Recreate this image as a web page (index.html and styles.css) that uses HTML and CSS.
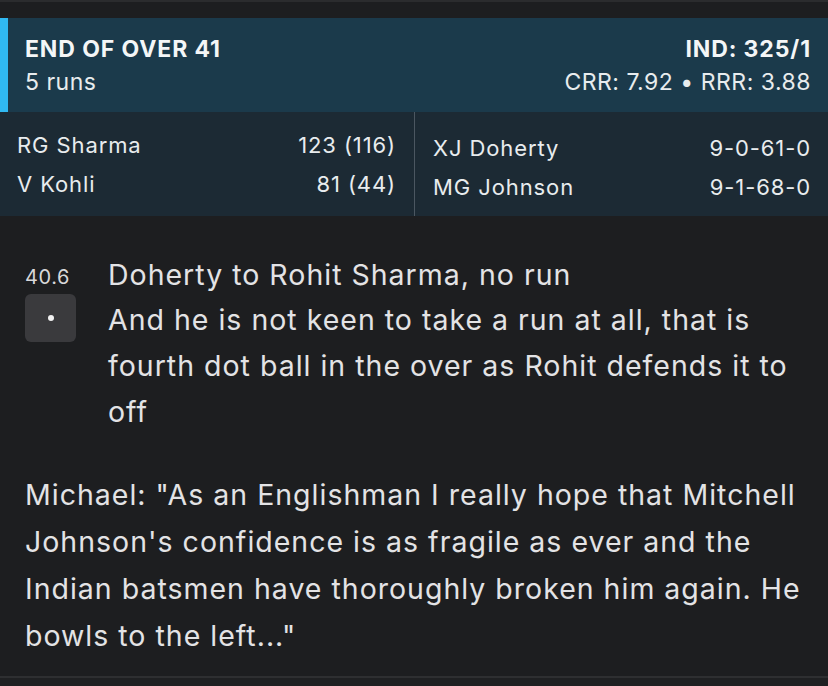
FILE: index.html
```html
<!DOCTYPE html>
<html>
<head>
<meta charset="utf-8">
<link rel="stylesheet" href="styles.css">
</head>
<body>
<div class="topline"></div>
<div class="page">
  <section class="over">
    <div class="over-left">
      <div class="over-title">END OF OVER 41</div>
      <div class="over-sub">5 runs</div>
    </div>
    <div class="over-right">
      <div class="over-title">IND: 325/1</div>
      <div class="over-sub">CRR: 7.92 • RRR: 3.88</div>
    </div>
  </section>
  <section class="players">
    <div class="col bats">
      <div class="row"><span>RG Sharma</span><span>123 (116)</span></div>
      <div class="row"><span>V Kohli</span><span>81 (44)</span></div>
    </div>
    <div class="col bowl">
      <div class="row"><span>XJ Doherty</span><span>9-0-61-0</span></div>
      <div class="row"><span>MG Johnson</span><span>9-1-68-0</span></div>
    </div>
  </section>
  <section class="ball">
    <div class="ball-meta">
      <div class="ball-num">40.6</div>
      <div class="ball-chip"><span class="dot"></span></div>
    </div>
    <div class="ball-text">
      <div class="ball-head">Doherty to Rohit Sharma, no run</div>
      <div class="ball-body">And he is not keen to take a run at all, that is fourth dot ball in the over as Rohit defends it to off</div>
    </div>
  </section>
  <section class="comment">Michael: "As an Englishman I really hope that Mitchell Johnson's confidence is as fragile as ever and the Indian batsmen have thoroughly broken him again. He bowls to the left..."</section>
  <footer class="footer"></footer>
</div>
</body>
</html>
```
FILE: styles.css
```css
* { box-sizing: border-box; }
html, body { margin: 0; padding: 0; }
body {
  width: 828px;
  height: 686px;
  overflow: hidden;
  background: #1d1e20;
  font-family: Inter, "Noto Sans", sans-serif;
  color: #e6e6e8;
}
.topline { height: 2px; background: #2b2c2e; }
.page { padding-top: 16px; }
.over {
  height: 94px;
  background: #1b3a4b;
  border-left: 8px solid #30b9f2;
  display: flex;
  justify-content: space-between;
  padding: 15px 17px 0 17px;
}
.over-title { font-weight: 700; font-size: 23px; line-height: 33px; letter-spacing: 0.9px; color: #f4f6f7; }
.over-sub { font-size: 23px; line-height: 33px; letter-spacing: 0.5px; color: #e8ecee; }
.over-right { text-align: right; }
.players {
  height: 104px;
  background: #1c2a34;
  display: flex;
}
.col { padding-top: 14px; }
.bats { padding-left: 17px; padding-right: 18px; border-right: 1px solid #4b5761; width: 415px; }
.bowl { padding-left: 18px; padding-right: 17px; flex: 1; padding-top: 17px; }
.row {
  display: flex;
  justify-content: space-between;
  font-size: 22px;
  line-height: 38.5px;
  letter-spacing: 0.9px;
  color: #e8ecee;
}
.ball {
  display: flex;
  padding: 37px 16px 0 25px;
}
.ball-meta { width: 83px; flex: none; }
.ball-num { font-size: 20px; line-height: 26px; letter-spacing: 0.6px; color: #d8d8da; padding-top: 11px; }
.ball-chip {
  margin-top: 4px;
  width: 51px;
  height: 48px;
  border-radius: 6px;
  background: #3a3a3d;
  display: flex;
  align-items: center;
  justify-content: center;
}
.dot { width: 6px; height: 6px; border-radius: 50%; background: #f2f2f2; }
.ball-text { font-size: 28.5px; letter-spacing: 1px; color: #e3e3e5; }
.ball-head { line-height: 44px; }
.ball-body { line-height: 46px; }
.comment {
  padding: 36px 16px 17px 25px;
  font-size: 28.5px;
  letter-spacing: 1px;
  line-height: 47px;
  color: #e3e3e5;
}
.footer { height: 20px; border-top: 2px solid #2e2f31; background: #1f2022; }
```
